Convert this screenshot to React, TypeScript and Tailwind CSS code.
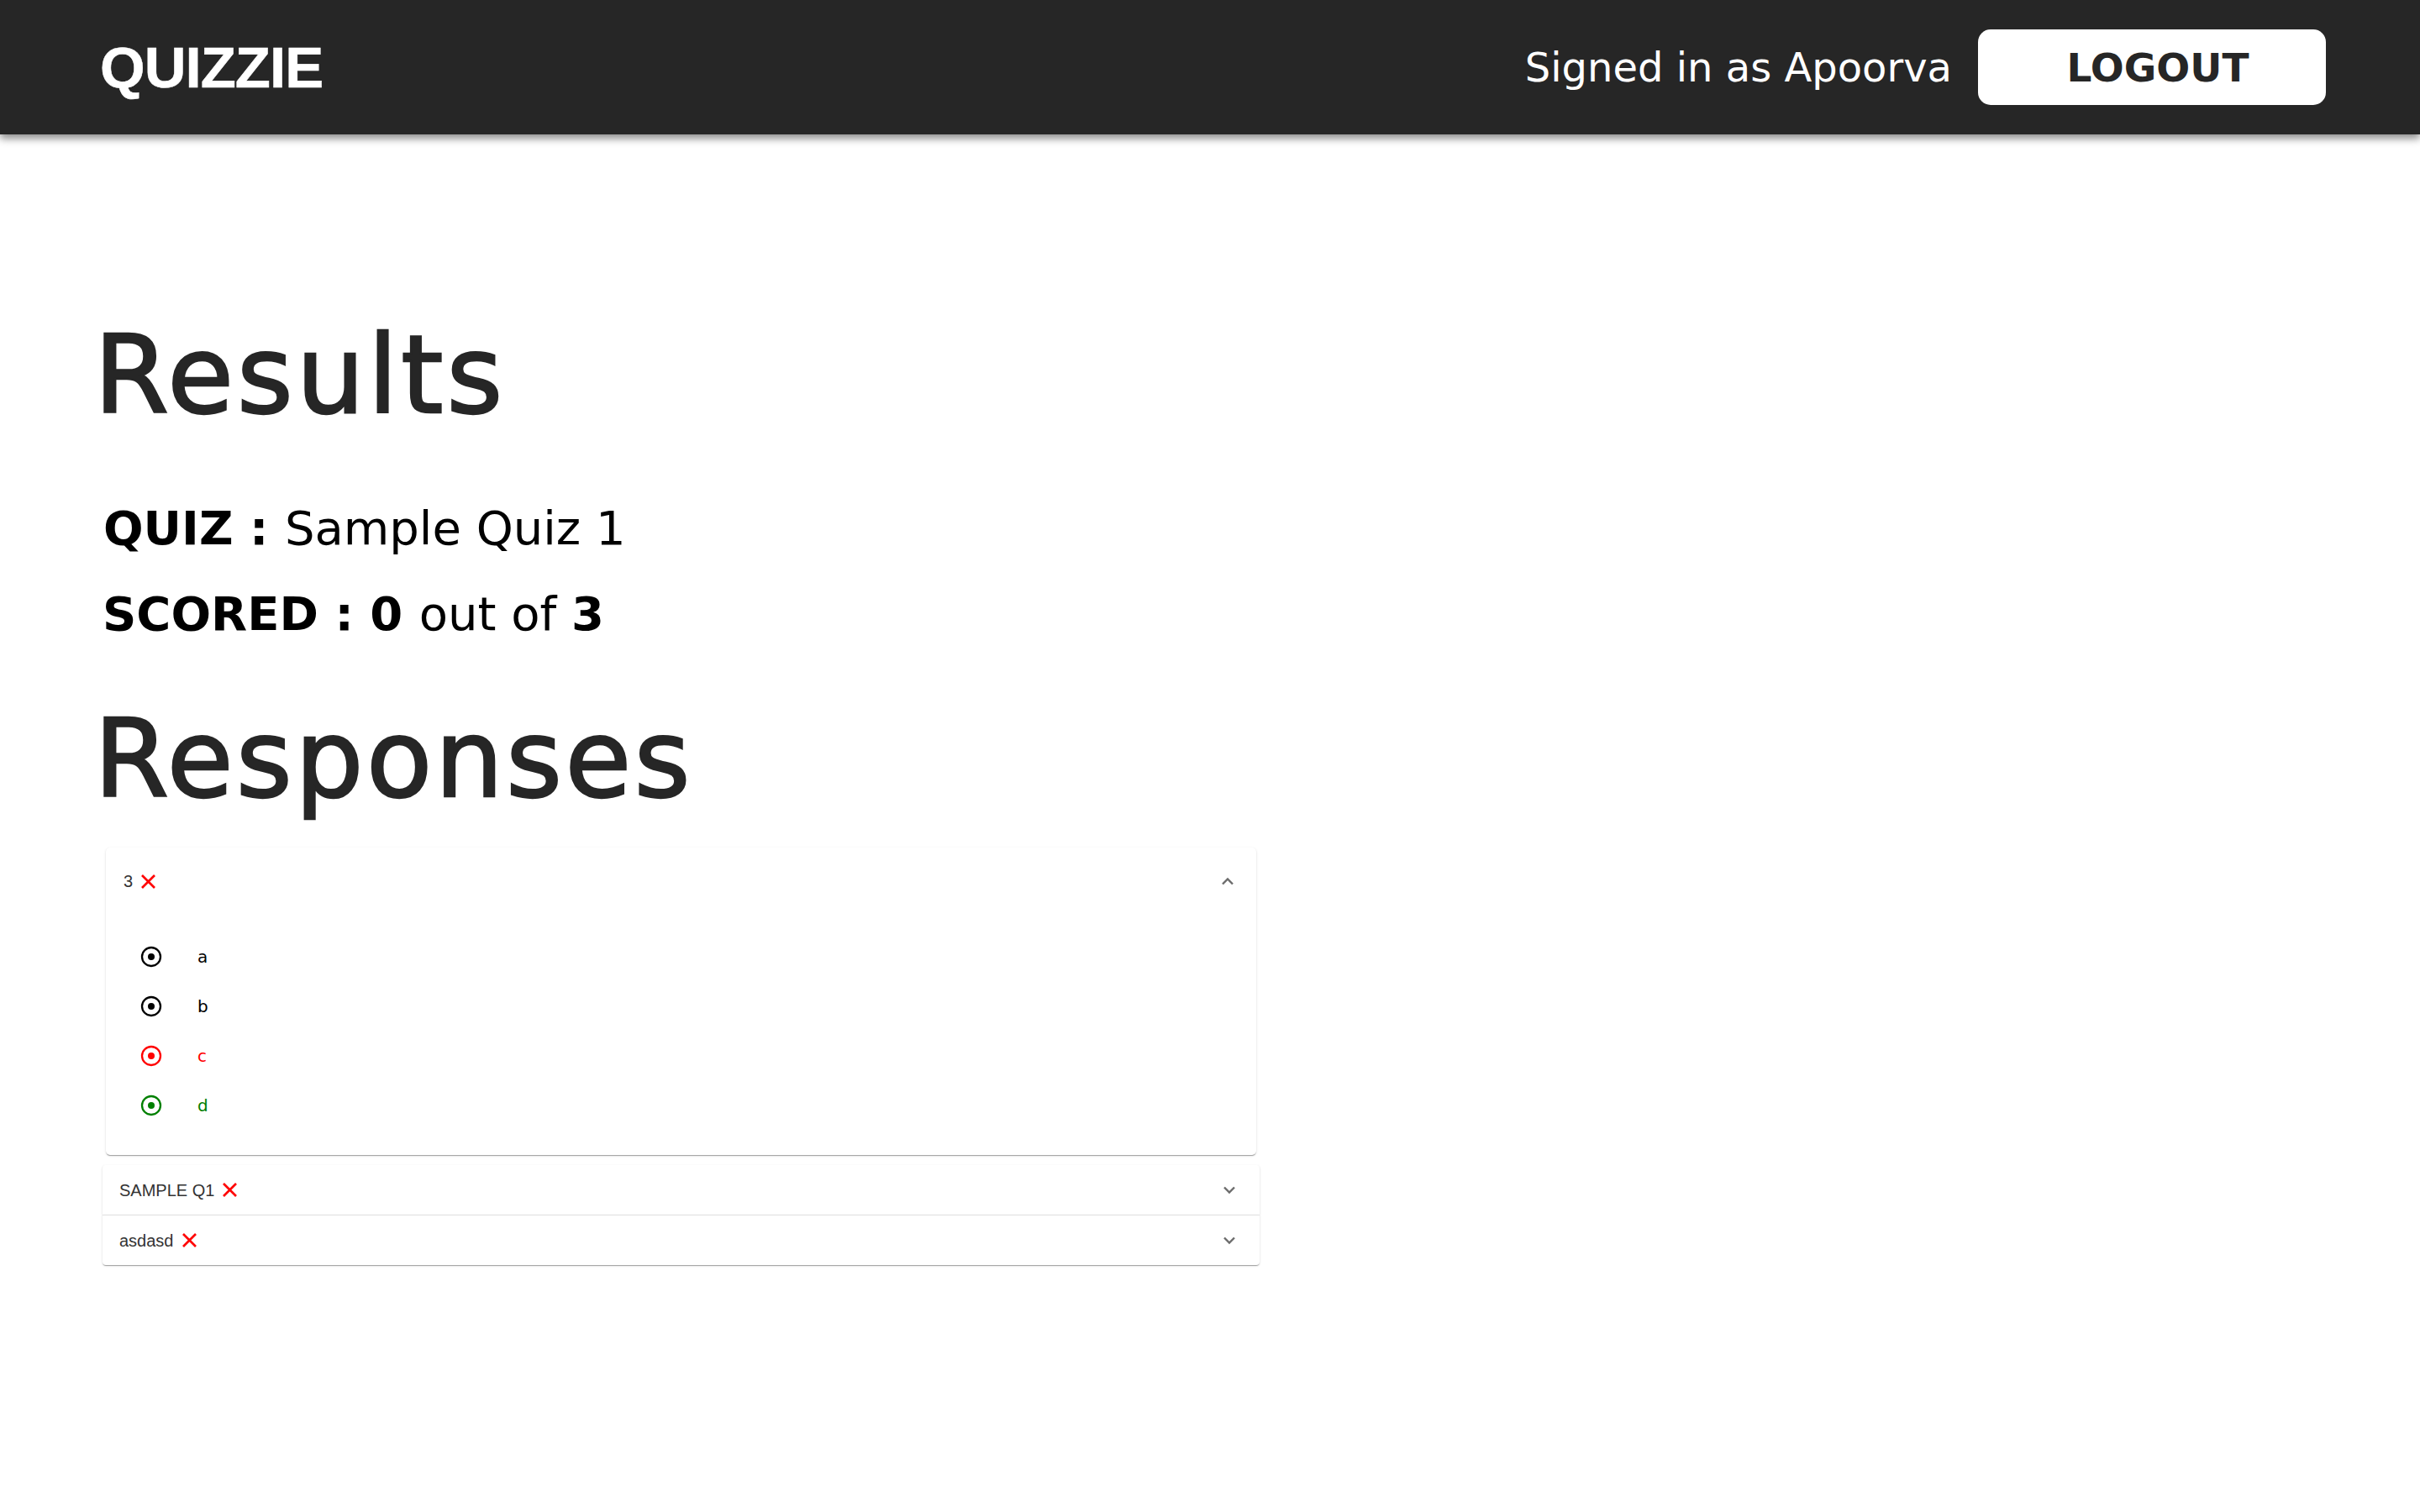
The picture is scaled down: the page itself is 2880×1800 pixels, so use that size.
import React from "react";

const dv = { fontFamily: '"DejaVu Sans", sans-serif' };
const lib = { fontFamily: '"Liberation Sans", Arial, sans-serif' };

function XIcon() {
  return (
    <svg width="19" height="19" viewBox="0 0 19 19" className="ml-[9px] shrink-0">
      <path d="M2 2 L17 17 M17 2 L2 17" stroke="#ff0000" strokeWidth="2.7" strokeLinecap="butt" />
    </svg>
  );
}

function Chevron({ up }: { up?: boolean }) {
  return (
    <svg width="16" height="10" viewBox="0 0 16 10" className="shrink-0">
      <path
        d={up ? "M2 8.5 L8 2.5 L14 8.5" : "M2 1.5 L8 7.5 L14 1.5"}
        stroke="#6b6b6b"
        strokeWidth="2.4"
        fill="none"
      />
    </svg>
  );
}

function Radio({ color }: { color: string }) {
  return (
    <svg width="26" height="26" viewBox="0 0 26 26" className="shrink-0">
      <circle cx="13" cy="13" r="11" stroke={color} strokeWidth="2.3" fill="none" />
      <circle cx="13" cy="13" r="4" fill={color} />
    </svg>
  );
}

const options = [
  { label: "a", color: "#000000" },
  { label: "b", color: "#000000" },
  { label: "c", color: "#ff0000" },
  { label: "d", color: "#008000" },
];

export default function App() {
  return (
    <div className="min-h-screen w-full bg-white">
      <header className="relative z-10 flex h-[160px] items-center justify-between bg-[#262626] pl-[119px] pr-[112px] shadow-[0_5px_9px_rgba(0,0,0,0.45)]">
        <div
          className="text-[69px] font-bold leading-none tracking-[-1px] text-white [-webkit-text-stroke:0.5px_white]"
          style={lib}
        >
          QUIZZIE
        </div>
        <div className="flex items-center gap-[31px]">
          <span className="text-[48px] leading-none text-white" style={dv}>
            Signed in as Apoorva
          </span>
          <button
            className="flex h-[90px] w-[414px] items-center justify-center rounded-[15px] bg-white pl-[14px] text-[47px] font-bold leading-none text-[#262626]"
            style={dv}
          >
            LOGOUT
          </button>
        </div>
      </header>

      <main className="px-[112px] pt-[223px] pb-[200px]">
        <h1
          className="text-[128px] leading-none tracking-[4px] text-[#262626] [-webkit-text-stroke:2.5px_#262626]"
          style={dv}
        >
          Results
        </h1>
        <div className="ml-[11px] mt-[90px] text-[56px] leading-none text-black" style={dv}>
          <span className="font-bold">QUIZ : </span>
          <span>Sample Quiz 1</span>
        </div>
        <div className="ml-[10px] mt-[46px] text-[56px] leading-none text-black" style={dv}>
          <span className="font-bold">SCORED : 0 </span>
          <span>out of </span>
          <span className="font-bold">3</span>
        </div>
        <h2
          className="mt-[81px] text-[128px] leading-none tracking-[3.5px] text-[#262626] [-webkit-text-stroke:2.5px_#262626]"
          style={dv}
        >
          Responses
        </h2>

        <div className="ml-[10px] mt-[41px] w-[1377px]" style={lib}>
          <div className="mx-[4px] rounded-[5px] bg-white shadow-[0_2px_1px_-1px_rgba(0,0,0,0.2),0_1px_1px_0_rgba(0,0,0,0.14),0_1px_3px_0_rgba(0,0,0,0.12)]">
            <div className="flex h-[80px] items-center justify-between pl-[21px] pr-[26px]">
              <div className="flex items-center text-[20px] text-[#333333]">
                <span>3</span>
                <XIcon />
              </div>
              <Chevron up />
            </div>
            <div className="flex flex-col pb-[30px] pt-[20px]">
              {options.map((o) => (
                <div key={o.label} className="flex h-[59px] items-center pl-[41px]">
                  <Radio color={o.color} />
                  <span className="ml-[42px] text-[20px] leading-none" style={{ ...dv, color: o.color }}>
                    {o.label}
                  </span>
                </div>
              ))}
            </div>
          </div>

          <div className="mt-[12px] rounded-t-[4px] bg-white shadow-[0_2px_1px_-1px_rgba(0,0,0,0.2),0_1px_1px_0_rgba(0,0,0,0.14),0_1px_3px_0_rgba(0,0,0,0.12)]">
            <div className="flex h-[59px] items-center justify-between pl-[20px] pr-[28px]">
              <div className="flex items-center text-[20px] text-[#333333]">
                <span>SAMPLE Q1</span>
                <XIcon />
              </div>
              <Chevron />
            </div>
          </div>
          <div className="rounded-b-[4px] border-t border-[#e0e0e0] bg-white shadow-[0_2px_1px_-1px_rgba(0,0,0,0.2),0_1px_1px_0_rgba(0,0,0,0.14),0_1px_3px_0_rgba(0,0,0,0.12)]">
            <div className="flex h-[59px] items-center justify-between pl-[20px] pr-[28px]">
              <div className="flex items-center text-[20px] text-[#333333]">
                <span>asdasd</span>
                <XIcon />
              </div>
              <Chevron />
            </div>
          </div>
        </div>
      </main>
    </div>
  );
}
